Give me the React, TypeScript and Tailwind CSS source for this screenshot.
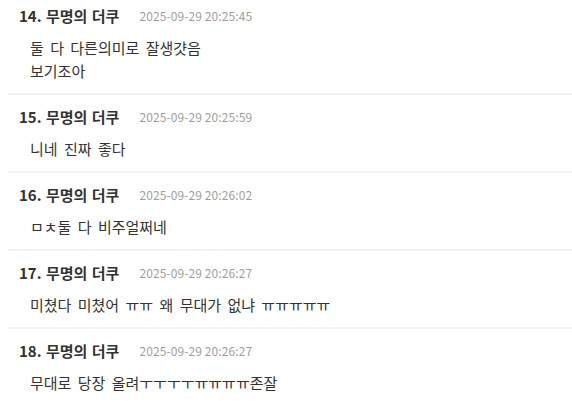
import React from "react";

type Comment = {
  no: number;
  name: string;
  date: string;
  lines: string[];
};

const comments: Comment[] = [
  { no: 14, name: "무명의 더쿠", date: "2025-09-29 20:25:45", lines: ["둘 다 다른의미로 잘생걋음", "보기조아"] },
  { no: 15, name: "무명의 더쿠", date: "2025-09-29 20:25:59", lines: ["니네 진짜 좋다"] },
  { no: 16, name: "무명의 더쿠", date: "2025-09-29 20:26:02", lines: ["ㅁㅊ둘 다 비주얼쩌네"] },
  { no: 17, name: "무명의 더쿠", date: "2025-09-29 20:26:27", lines: ["미쳤다 미쳤어 ㅠㅠ 왜 무대가 없냐 ㅠㅠㅠㅠㅠ"] },
  { no: 18, name: "무명의 더쿠", date: "2025-09-29 20:26:27", lines: ["무대로 당장 올려ㅜㅜㅜㅜㅠㅠㅠㅠ존잘"] },
];

function CommentItem({ c }: { c: Comment }) {
  return (
    <li className="border-t-2 border-[#f4f4f4] pt-[12px] pb-[11px]">
      <div className="flex items-center pl-[11px] h-5 leading-5">
        <span className="text-[15px] font-bold text-[#333] [word-spacing:1px]">
          {c.no}. {c.name}
        </span>
        <span className="ml-[20px] text-[12px] text-[#9e9e9e] [letter-spacing:0.1px]">{c.date}</span>
      </div>
      <div className="mt-[10px] pl-[22px] text-[15px] leading-[23px] text-[#333] [word-spacing:3px]">
        {c.lines.map((l, i) => (
          <p key={i}>{l}</p>
        ))}
      </div>
    </li>
  );
}

export default function App() {
  return (
    <div
      className="w-[572px] h-[405px] overflow-hidden bg-white"
      style={{ fontFamily: '"Noto Sans CJK KR", "Noto Sans", sans-serif' }}
    >
      <ul className="ml-2 -mt-[8px]">
        {comments.map((c) => (
          <CommentItem key={c.no} c={c} />
        ))}
      </ul>
    </div>
  );
}
